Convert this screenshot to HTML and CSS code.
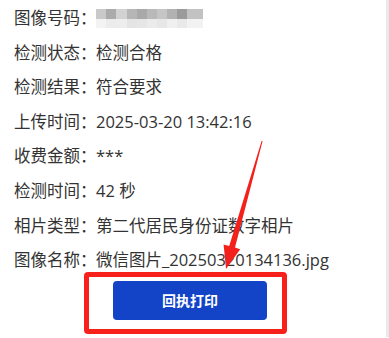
FILE: index.html
```html
<!DOCTYPE html>
<html>
<head>
  <meta charset="UTF-8">
  <link rel="stylesheet" href="styles.css">
</head>
<body>
  <div class="panel">
    <div class="row"><span class="label">图像号码：</span><span class="masked"></span></div>
    <div class="row"><span class="label">检测状态：</span>检测合格</div>
    <div class="row"><span class="label">检测结果：</span>符合要求</div>
    <div class="row"><span class="label">上传时间：</span>2025-03-20 13:42:16</div>
    <div class="row"><span class="label">收费金额：</span>***</div>
    <div class="row"><span class="label">检测时间：</span>42 秒</div>
    <div class="row"><span class="label">相片类型：</span>第二代居民身份证数字相片</div>
    <div class="row"><span class="label">图像名称：</span>微信图片_20250320134136.jpg</div>
    <div class="actions">
      <button class="print-btn">回执打印</button>
    </div>
    <!-- annotation overlay -->
    <div class="mark-box"></div>
    <svg class="mark-arrow" width="389" height="338" viewBox="0 0 389 338">
      <polygon fill="#f4201c" points="262.6,141 235,247.6 240.2,249.2 226,269 223.6,244.4 229.2,246.1 261.6,141"/>
    </svg>
  </div>
</body>
</html>
```

FILE: styles.css
```css
body { margin: 0; font-family: "Open Sans", "Noto Sans CJK SC", sans-serif; font-size: 16.5px; color: #333; background: #fff; }
.panel { position: relative; width: 389px; height: 337px; box-sizing: border-box; padding: 1px 0 0 14px; border-right: 3px solid #e6e8eb; }
.row { line-height: 34.6px; white-space: nowrap; }
.label { display: inline-block; width: 82px; }
.masked { display: inline-block; vertical-align: middle; width: 107px; height: 19px; margin-top: -3px;
  background:
    linear-gradient(90deg, #c9c9c9 0 10px, #ababab 10px 20px, #d2d2d2 20px 31px, #b6b6b6 31px 41px, #a9a9a9 41px 51px, #b9b9b9 51px 61px, #c5c5c5 61px 71px, #b2b2b2 71px 81px, #9b9b9b 81px 91px, #c2c2c2 91px 107px) top / 100% 10px no-repeat,
    linear-gradient(90deg, #f3f3f3 0 10px, #ececec 10px 20px, #ededed 20px 31px, #e4e4e4 31px 41px, #e6e6e6 41px 51px, #ebebeb 51px 61px, #e7e7e7 61px 71px, #f0f0f0 71px 81px, #e9e9e9 81px 91px, #f2f2f2 91px 107px) bottom / 100% 9px no-repeat; }
.actions { margin-top: 3px; padding-left: 99px; }
.print-btn { width: 154px; height: 39px; border: none; border-radius: 4px; background: #1343c6; color: #fff; font-family: "Noto Sans CJK SC", sans-serif; font-size: 14px; font-weight: bold; cursor: pointer; }
.mark-box { position: absolute; left: 84px; top: 272px; width: 203px; height: 62px; box-sizing: border-box; border: 5px solid #f7201b; border-radius: 4px; }
.mark-arrow { position: absolute; left: 0; top: 0; pointer-events: none; }
```
